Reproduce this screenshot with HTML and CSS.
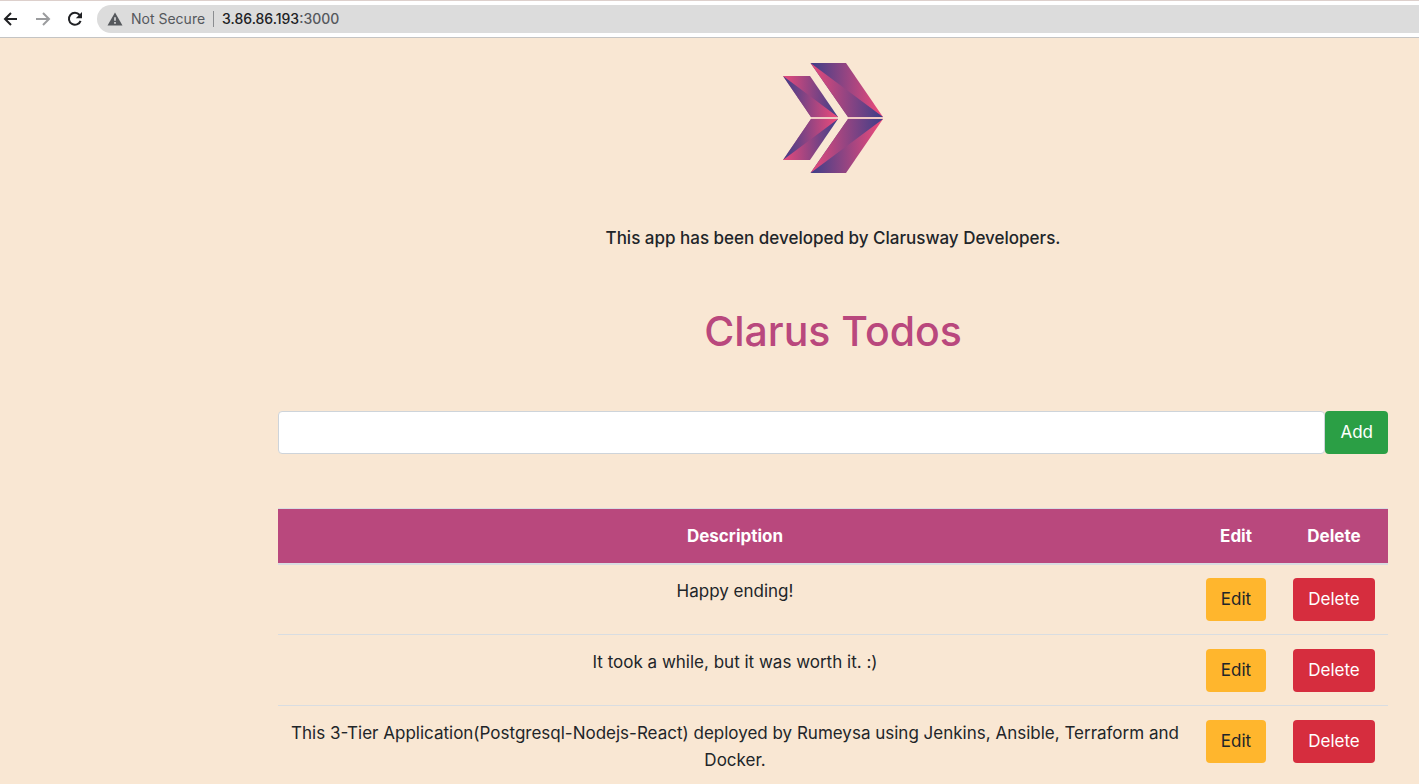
FILE: index.html
```html
<!DOCTYPE html>
<html lang="en">
<head>
<meta charset="utf-8">
<meta name="viewport" content="width=device-width, initial-scale=1">
<title>Clarus Todos</title>
<link rel="stylesheet" href="styles.css">
</head>
<body>
<header class="toolbar">
  <button class="nav-button" type="button" aria-label="Back">
    <svg width="16" height="16" viewBox="0 0 16 16"><path d="M14 8H2.5M8 2 2 8l6 6" fill="none" stroke="#202124" stroke-width="2"/></svg>
  </button>
  <button class="nav-button" type="button" aria-label="Forward" disabled>
    <svg width="16" height="16" viewBox="0 0 16 16"><path d="M1 8h12.5M8 2l6 6-6 6" fill="none" stroke="#9b9c9e" stroke-width="2"/></svg>
  </button>
  <button class="nav-button" type="button" aria-label="Reload">
    <svg width="16" height="16" viewBox="0 0 16 16"><path d="M13.6 9.8A6 6 0 1 1 12.6 4" fill="none" stroke="#202124" stroke-width="2"/><path d="M15 1v6.2H8.8z" fill="#202124"/></svg>
  </button>
  <div class="address">
    <button class="security" type="button">
      <svg width="16" height="14" viewBox="0 0 16 14"><path d="M8 .5 15.5 13.5H.5z" fill="#55585c"/><path d="M8 5.2v3.6M8 10v1.7" stroke="#dcdcdc" stroke-width="1.6"/></svg>
      <span>Not Secure</span>
    </button>
    <span class="divider"></span>
    <span class="url"><span class="host">3.86.86.193</span>:3000</span>
  </div>
</header>
<main class="page">
  <svg class="logo" width="100" height="110" viewBox="0 0 100 110" role="img" aria-label="Clarusway">
    <defs>
      <linearGradient id="warm"><stop offset="0" stop-color="#e84a7b"/><stop offset="1" stop-color="#3c3f89"/></linearGradient>
      <linearGradient id="cool"><stop offset="0" stop-color="#3c3f89"/><stop offset=".95" stop-color="#e84a7b"/></linearGradient>
      <g id="half">
        <path d="M27.5 0H63L100 54H65z" fill="url(#cool)"/>
        <path d="M27.5 0 100 54H65z" fill="url(#warm)"/>
        <path d="M0 13H27L55 54H28z" fill="url(#warm)"/>
        <path d="M0 13 55 54H28z" fill="url(#cool)"/>
      </g>
    </defs>
    <path d="M28 54H55v2H28zM65 54h35v2H65z" fill="#f0c9c3"/>
    <use href="#half"/>
    <use href="#half" transform="matrix(1 0 0 -1 0 110)"/>
  </svg>
  <p class="credit">This app has been developed by Clarusway Developers.</p>
  <h1 class="title">Clarus Todos</h1>
  <form class="add-form">
    <input class="todo-input" type="text" aria-label="New todo">
    <button class="btn btn-add" type="button">Add</button>
  </form>
  <table class="todos">
    <thead>
      <tr><th>Description</th><th class="col-edit">Edit</th><th class="col-delete">Delete</th></tr>
    </thead>
    <tbody>
      <tr>
        <td>Happy ending!</td>
        <td><button class="btn btn-edit" type="button">Edit</button></td>
        <td><button class="btn btn-delete" type="button">Delete</button></td>
      </tr>
      <tr>
        <td>It took a while, but it was worth it. :)</td>
        <td><button class="btn btn-edit" type="button">Edit</button></td>
        <td><button class="btn btn-delete" type="button">Delete</button></td>
      </tr>
      <tr>
        <td>This 3-Tier Application(Postgresql-Nodejs-React) deployed by Rumeysa using Jenkins, Ansible, Terraform and Docker.</td>
        <td><button class="btn btn-edit" type="button">Edit</button></td>
        <td><button class="btn btn-delete" type="button">Delete</button></td>
      </tr>
    </tbody>
  </table>
</main>
</body>
</html>
```
FILE: styles.css
```css
* {
  box-sizing: border-box;
}

body {
  margin: 0;
  background: #f9e7d3;
  color: #212529;
  font-family: Inter, "Liberation Sans", sans-serif;
  font-size: 17px;
  line-height: 27px;
}

button {
  font: inherit;
  color: inherit;
}

.toolbar {
  display: flex;
  align-items: center;
  gap: 16px;
  padding: 4px 0 4px 3px;
  background: #fff;
  border-top: 1px solid #ddd0cc;
  border-bottom: 1px solid #c4c4c4;
}

.nav-button {
  display: flex;
  padding: 0;
  border: 0;
  background: none;
}

.address {
  display: flex;
  flex: 1;
  align-items: center;
  gap: 8px;
  height: 28px;
  margin-left: -2px;
  padding-left: 10px;
  border-radius: 14px 0 0 14px;
  background: #dcdcdc;
  color: #55585c;
  font-size: 14px;
  line-height: 20px;
}

.security {
  display: flex;
  align-items: center;
  gap: 8px;
  padding: 0;
  border: 0;
  background: none;
}

.divider {
  width: 1px;
  height: 16px;
  background: #8b8d90;
}

.url {
  font-weight: 500;
}

.host {
  color: #202124;
}

.page {
  padding: 25px 31px 0 278px;
  text-align: center;
}

.logo {
  display: block;
  margin: 0 auto;
}

.credit {
  margin: 52px 0 0;
  font-weight: 500;
}

.title {
  margin: 52px 0 0;
  color: #b9487d;
  font-size: 41px;
  font-weight: 500;
  line-height: 54px;
}

.add-form {
  display: flex;
  margin: 53px 0 0;
}

.todo-input {
  flex: 1;
  min-width: 0;
  padding: 7px 13px;
  border: 1px solid #ced4da;
  border-radius: 4px;
  background: #fff;
  font: inherit;
}

.btn {
  padding: 8px 15px;
  border: 0;
  border-radius: 4px;
  vertical-align: top;
}

.btn-add {
  background: #2b9f45;
  color: #fff;
}

.btn-edit {
  background: #ffb62d;
}

.btn-delete {
  background: #d62d3e;
  color: #fff;
}

.todos {
  width: 100%;
  margin-top: 54px;
  border-spacing: 0;
}

.todos th {
  padding: 14px 13px 13px;
  border-top: 1px solid #d9dde1;
  border-bottom: 2px solid #d9dde1;
  background: #b9487d;
  background-clip: padding-box;
  color: #fff;
  font-weight: 700;
}

.todos td {
  padding: 14px 13px 13px;
  border-top: 1px solid #d9dde1;
  vertical-align: top;
}

.todos tbody tr:first-child td {
  padding-top: 13px;
  border-top: 0;
}

.col-edit {
  width: 88px;
}

.col-delete {
  width: 108px;
}
```
